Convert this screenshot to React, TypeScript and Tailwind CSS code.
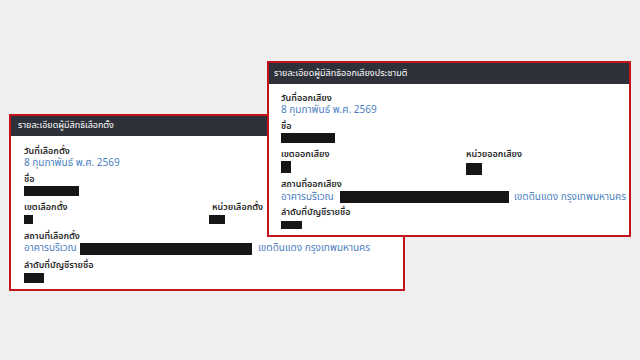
import React from "react";

const FONT = '"Tahoma", "Noto Sans Thai", "Noto Sans Thai UI", "Loma", "Garuda", "Sarabun", "Noto Sans", sans-serif';

function Bar({ w, h }: { w: number; h: number }) {
  return <div className="bg-[#161616]" style={{ width: w, height: h }} />;
}

function Label({ children }: { children: React.ReactNode }) {
  return <div className="text-[9px] leading-[12px] font-semibold text-[#2b2b2b] whitespace-nowrap">{children}</div>;
}

function Value({ children }: { children: React.ReactNode }) {
  return <div className="text-[10px] leading-[13px] text-[#4d7fc2] whitespace-nowrap">{children}</div>;
}

function BackCard() {
  return (
    <div className="absolute left-[9px] top-[114px] w-[396px] h-[177px] border-2 border-[#c3141c] bg-white flex flex-col">
      <div className="h-[20px] bg-[#2e313a] flex items-center pl-[7px] text-white text-[9px] whitespace-nowrap">
        รายละเอียดผู้มีสิทธิเลือกตั้ง
      </div>
      <div className="flex flex-col pl-[13px] pt-[9px]">
        <Label>วันที่เลือกตั้ง</Label>
        <Value>8 กุมภาพันธ์ พ.ศ. 2569</Value>
        <div className="mt-[3px]"><Label>ชื่อ</Label></div>
        <div className="mt-[1px]"><Bar w={55} h={10} /></div>
        <div className="flex mt-[5px]">
          <div className="w-[185px] flex flex-col">
            <Label>เขตเลือกตั้ง</Label>
            <div className="mt-[2px]"><Bar w={9} h={9} /></div>
          </div>
          <div className="flex flex-col">
            <div className="pl-[3px]"><Label>หน่วยเลือกตั้ง</Label></div>
            <div className="mt-[2px]"><Bar w={16} h={9} /></div>
          </div>
        </div>
        <div className="mt-[6px]"><Label>สถานที่เลือกตั้ง</Label></div>
        <div className="flex items-center h-[13px]">
          <div className="w-[56px]"><Value>อาคารบริเวณ</Value></div>
          <Bar w={172} h={12} />
          <div className="ml-[6px]"><Value>เขตดินแดง กรุงเทพมหานคร</Value></div>
        </div>
        <div className="mt-[4px]"><Label>ลำดับที่บัญชีรายชื่อ</Label></div>
        <div className="mt-[2px]"><Bar w={20} h={10} /></div>
      </div>
    </div>
  );
}

function FrontCard() {
  return (
    <div className="absolute left-[267px] top-[61px] w-[364px] h-[176px] border-2 border-[#c3141c] bg-white flex flex-col">
      <div className="h-[21px] bg-[#2e313a] flex items-center pl-[5px] text-white text-[9px] whitespace-nowrap">
        รายละเอียดผู้มีสิทธิออกเสียงประชามติ
      </div>
      <div className="flex flex-col pl-[12px] pt-[8px]">
        <Label>วันที่ออกเสียง</Label>
        <Value>8 กุมภาพันธ์ พ.ศ. 2569</Value>
        <div className="mt-[3px]"><Label>ชื่อ</Label></div>
        <div className="mt-[1px]"><Bar w={54} h={10} /></div>
        <div className="flex mt-[5px]">
          <div className="w-[185px] flex flex-col">
            <Label>เขตออกเสียง</Label>
            <div className="mt-[1px]"><Bar w={10} h={12} /></div>
          </div>
          <div className="flex flex-col">
            <Label>หน่วยออกเสียง</Label>
            <div className="mt-[3px]"><Bar w={16} h={12} /></div>
          </div>
        </div>
        <div className="mt-[3px]"><Label>สถานที่ออกเสียง</Label></div>
        <div className="flex items-center h-[14px]">
          <div className="w-[59px]"><Value>อาคารบริเวณ</Value></div>
          <Bar w={169} h={12} />
          <div className="ml-[5px]"><Value>เขตดินแดง กรุงเทพมหานคร</Value></div>
        </div>
        <div className="mt-[2px]"><Label>ลำดับที่บัญชีรายชื่อ</Label></div>
        <div className="mt-[3px]"><Bar w={21} h={8} /></div>
      </div>
    </div>
  );
}

export default function App() {
  return (
    <div className="relative w-[640px] h-[360px] bg-[#efefef] overflow-hidden" style={{ fontFamily: FONT }}>
      <BackCard />
      <FrontCard />
    </div>
  );
}
